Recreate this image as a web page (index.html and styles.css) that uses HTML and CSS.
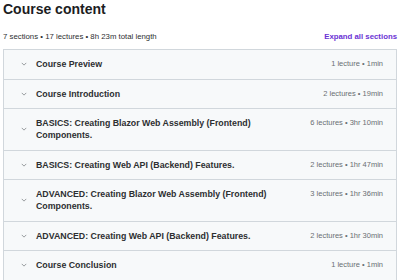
FILE: index.html
```html
<!DOCTYPE html>
<html>
<head>
<meta charset="utf-8">
<meta name="format-detection" content="telephone=no">
<link rel="stylesheet" href="styles.css">
</head>
<body>
<div class="page">
  <h2 class="title">Course content</h2>
  <div class="meta">
    <span class="summary">7 sections • 17 lectures • 8h 23m total length</span>
    <span class="expand">Expand all sections</span>
  </div>
  <div class="sections">
    <div class="row">
      <svg class="chev" viewBox="0 0 8 5"><path d="M1 1 L4 4 L7 1" fill="none" stroke="#6a6f73" stroke-width="0.9"/></svg>
      <span class="name">Course Preview</span>
      <span class="info">1 lecture • 1min</span>
    </div>
    <div class="row">
      <svg class="chev" viewBox="0 0 8 5"><path d="M1 1 L4 4 L7 1" fill="none" stroke="#6a6f73" stroke-width="0.9"/></svg>
      <span class="name">Course Introduction</span>
      <span class="info">2 lectures • 19min</span>
    </div>
    <div class="row">
      <svg class="chev" viewBox="0 0 8 5"><path d="M1 1 L4 4 L7 1" fill="none" stroke="#6a6f73" stroke-width="0.9"/></svg>
      <span class="name">BASICS: Creating Blazor Web Assembly (Frontend) Components.</span>
      <span class="info">6 lectures • 3hr 10min</span>
    </div>
    <div class="row">
      <svg class="chev" viewBox="0 0 8 5"><path d="M1 1 L4 4 L7 1" fill="none" stroke="#6a6f73" stroke-width="0.9"/></svg>
      <span class="name">BASICS: Creating Web API (Backend) Features.</span>
      <span class="info">2 lectures • 1hr 47min</span>
    </div>
    <div class="row">
      <svg class="chev" viewBox="0 0 8 5"><path d="M1 1 L4 4 L7 1" fill="none" stroke="#6a6f73" stroke-width="0.9"/></svg>
      <span class="name">ADVANCED: Creating Blazor Web Assembly (Frontend) Components.</span>
      <span class="info">3 lectures • 1hr 36min</span>
    </div>
    <div class="row">
      <svg class="chev" viewBox="0 0 8 5"><path d="M1 1 L4 4 L7 1" fill="none" stroke="#6a6f73" stroke-width="0.9"/></svg>
      <span class="name">ADVANCED: Creating Web API (Backend) Features.</span>
      <span class="info">2 lectures • 1hr 30min</span>
    </div>
    <div class="row">
      <svg class="chev" viewBox="0 0 8 5"><path d="M1 1 L4 4 L7 1" fill="none" stroke="#6a6f73" stroke-width="0.9"/></svg>
      <span class="name">Course Conclusion</span>
      <span class="info">1 lecture • 1min</span>
    </div>
  </div>
</div>
</body>
</html>
```
FILE: styles.css
```css
html, body {
  margin: 0;
  padding: 0;
  background: #ffffff;
}
body {
  font-family: "Liberation Sans", Arial, sans-serif;
  color: #2d2f31;
}
.page {
  padding: 0 3px;
}
.title {
  margin: 0;
  padding-top: 1px;
  font-size: 14px;
  line-height: 17px;
  font-weight: 800;
  color: #1c1d1f;
}
.meta {
  display: flex;
  justify-content: space-between;
  align-items: center;
  margin-top: 12px;
  height: 12px;
  font-size: 7.8px;
}
.summary {
  color: #2d2f31;
}
.expand {
  color: #6a32d4;
  font-weight: 700;
  font-size: 7.8px;
}
.sections {
  margin-top: 7px;
  border: 1px solid #d1d7dc;
  border-bottom: none;
}
.row {
  display: flex;
  align-items: center;
  background: #f7f9fa;
  border-bottom: 1px solid #d1d7dc;
  padding: 8.25px 13px 8.25px 17px;
}
.chev {
  width: 6px;
  height: 4px;
  flex: none;
  margin-right: 9px;
}
.name {
  flex: 1;
  font-size: 8.8px;
  line-height: 12px;
  font-weight: 700;
  color: #2d2f31;
  padding-right: 20px;
}
.info {
  flex: none;
  font-size: 7.5px;
  line-height: 12px;
  color: #6a6f73;
  align-self: flex-start;
}
```
